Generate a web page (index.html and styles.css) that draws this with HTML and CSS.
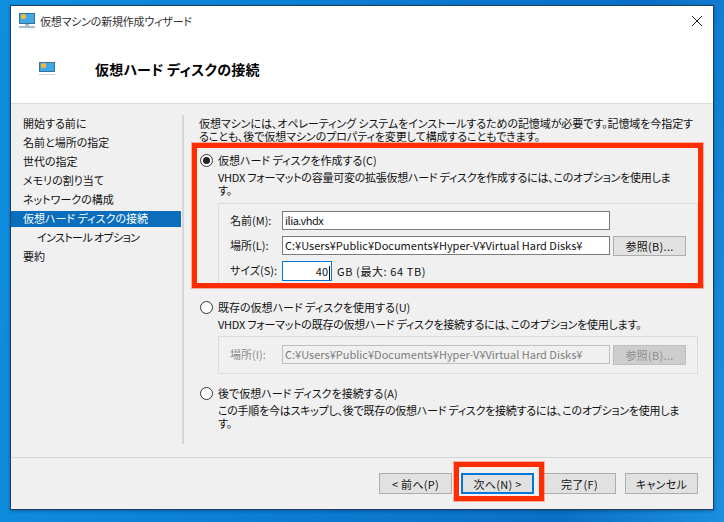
FILE: index.html
```html
<!DOCTYPE html>
<html lang="ja">
<head>
<meta charset="utf-8">
<title>仮想マシンの新規作成ウィザード</title>
<link rel="stylesheet" href="styles.css">
</head>
<body>
<div class="window">
  <div class="titlebar">
    <svg class="title-icon" width="16" height="16" viewBox="0 0 16 16"><rect x="0.5" y="0.5" width="15" height="10" fill="#3fa9e8" stroke="#3a6f96"/><circle cx="4.5" cy="3.5" r="2.6" fill="#f5b93a"/><rect x="6" y="11" width="4" height="2" fill="#a9bccb"/><rect x="0" y="13" width="16" height="2" fill="#a9bccb"/></svg>
    <span class="title-text">仮想マシンの新規作成ウィザード</span>
    <svg class="close" width="10" height="10" viewBox="0 0 10 10"><path d="M0 0L10 10M10 0L0 10" stroke="#222" fill="none"/></svg>
  </div>
  <div class="header">
    <svg class="head-icon" width="16" height="14" viewBox="0 0 16 14"><rect x="0.5" y="0.5" width="15" height="9" fill="#3fa9e8" stroke="#3a6f96"/><circle cx="4.5" cy="3.5" r="2.6" fill="#f5b93a"/><rect x="0" y="12" width="16" height="1" fill="#c5d2da"/></svg>
    <h1 class="head-title">仮想ハード ディスクの接続</h1>
  </div>
  <div class="body">
    <nav class="nav">
      <div class="nav-item">開始する前に</div>
      <div class="nav-item">名前と場所の指定</div>
      <div class="nav-item">世代の指定</div>
      <div class="nav-item">メモリの割り当て</div>
      <div class="nav-item">ネットワークの構成</div>
      <div class="nav-item nav-active">仮想ハード ディスクの接続</div>
      <div class="nav-item nav-sub">インストール オプション</div>
      <div class="nav-item">要約</div>
    </nav>
    <main class="content">
      <p class="intro">仮想マシンには、オペレーティング システムをインストールするための記憶域が必要です。記憶域を今指定す<br>ることも、後で仮想マシンのプロパティを変更して構成することもできます。</p>

      <div class="option opt-create">
        <div class="radio-row"><span class="radio radio-on"></span><span>仮想ハード ディスクを作成する(C)</span></div>
        <p class="desc">VHDX フォーマットの容量可変の拡張仮想ハード ディスクを作成するには、このオプションを使用しま<br>す。</p>
        <div class="group group-create">
          <div class="field"><span class="label">名前(M):</span><span class="input input-name">ilia.vhdx</span></div>
          <div class="field"><span class="label">場所(L):</span><span class="input">C:¥Users¥Public¥Documents¥Hyper-V¥Virtual Hard Disks¥</span><span class="btn btn-browse">参照(B)...</span></div>
          <div class="field"><span class="label">サイズ(S):</span><span class="input input-size">40</span><span class="unit">GB (最大: 64 TB)</span></div>
        </div>
      </div>

      <div class="option opt-existing">
        <div class="radio-row"><span class="radio"></span><span>既存の仮想ハード ディスクを使用する(U)</span></div>
        <p class="desc">VHDX フォーマットの既存の仮想ハード ディスクを接続するには、このオプションを使用します。</p>
        <div class="group group-existing">
          <div class="field field-disabled"><span class="label">場所(I):</span><span class="input input-disabled">C:¥Users¥Public¥Documents¥Hyper-V¥Virtual Hard Disks¥</span><span class="btn btn-browse btn-disabled">参照(B)...</span></div>
        </div>
      </div>

      <div class="option opt-later">
        <div class="radio-row"><span class="radio"></span><span>後で仮想ハード ディスクを接続する(A)</span></div>
        <p class="desc">この手順を今はスキップし、後で既存の仮想ハード ディスクを接続するには、このオプションを使用しま<br>す。</p>
      </div>
    </main>
  </div>
  <div class="footer">
    <span class="btn btn-foot">&lt; 前へ(P)</span>
    <span class="btn btn-foot btn-default">次へ(N) &gt;</span>
    <span class="btn btn-foot">完了(F)</span>
    <span class="btn btn-foot">キャンセル</span>
  </div>
  <div class="mark mark-form"></div>
  <div class="mark mark-next"></div>
</div>
</body>
</html>
```
FILE: styles.css
```css
* { box-sizing: border-box; }
html, body { margin: 0; height: 100%; }
body {
  width: 724px;
  height: 522px;
  overflow: hidden;
  padding: 5px 10px 0 10px;
  background: linear-gradient(100deg, #0f8fe0 0%, #0b7ad0 50%, #0a6fc6 80%, #1b8fe0 100%);
  font-family: "Noto Sans CJK JP", "Liberation Sans", sans-serif;
  font-size: 11px;
  font-feature-settings: "palt";
  color: #111;
}
.window {
  position: relative;
  width: 704px;
  height: 505px;
  background: #f0f0f0;
  border: 1px solid #1c3f63;
  display: flex;
  flex-direction: column;
  box-shadow: 0 1px 3px rgba(0, 0, 0, .3);
}
.titlebar {
  height: 29px;
  background: #fff;
  display: flex;
  align-items: center;
  padding: 0 11px 0 8px;
  flex: none;
}
.title-icon { flex: none; }
.title-text { margin-left: 5px; color: #333; line-height: 16px; letter-spacing: -.2px; }
.close { margin-left: auto; }
.header {
  height: 69px;
  background: #fff;
  border-bottom: 1px solid #dcdcdc;
  display: flex;
  align-items: center;
  padding: 0 0 1px 28px;
  flex: none;
}
.head-title {
  margin: 0 0 0 40px;
  font-size: 14px;
  font-weight: 700;
  color: #000;
  line-height: 18px;
  letter-spacing: .25px;
}
.body { display: flex; flex: none; height: 353px; }
.nav {
  width: 173px;
  flex: none;
  margin-top: 11px;
  height: 329px;
  border-right: 2px solid #d6d6d6;
  padding-top: 1px;
}
.nav-item {
  height: 19px;
  line-height: 15px;
  padding-left: 12px;
  white-space: nowrap;
}
.nav-active {
  background: #0a6ebd;
  color: #fff;
  margin-right: 1px;
  height: 16px;
  margin-bottom: 3px;
}
.nav-sub { padding-left: 26px; letter-spacing: -.6px; }
.content { flex: 1; padding-left: 15px; position: relative; min-width: 0; }
.intro {
  margin: 13px 0 0;
  line-height: 13px;
  white-space: nowrap;
  letter-spacing: -.08px;
}
.option { display: block; }
.opt-create { margin-top: 9px; }
.opt-existing { margin-top: 12px; }
.opt-later { margin-top: 11px; }
.radio-row {
  display: flex;
  align-items: center;
  height: 16px;
  line-height: 16px;
  padding-left: 1px;
  white-space: nowrap;
}
.radio {
  width: 13px;
  height: 13px;
  border-radius: 50%;
  border: 1px solid #333;
  background: #fff;
  margin-right: 5px;
  flex: none;
  position: relative;
}
.radio-on { display: flex; align-items: center; justify-content: center; }
.radio-on::after {
  content: "";
  width: 7px;
  height: 7px;
  border-radius: 50%;
  background: #222;
}
.desc {
  margin: 3px 0 0 19px;
  line-height: 13px;
  white-space: nowrap;
  letter-spacing: -.25px;
}
.group {
  margin: 5px 0 0 19px;
  width: 480px;
  border: 1px solid #dcdcdc;
  padding: 7px 10px 0 11px;
}
.group-create { height: 84px; margin-top: 6px; }
.group-existing { height: 38px; padding-top: 8px; }
.field { display: flex; align-items: flex-start; height: 25px; }
.label { width: 52px; flex: none; line-height: 19px; white-space: nowrap; }
.input {
  width: 328px;
  height: 19px;
  line-height: 17px;
  border: 1px solid #7a7a7a;
  background: #fff;
  padding-left: 2px;
  white-space: nowrap;
  overflow: hidden;
  flex: none;
}
.input-name { letter-spacing: -.5px; }
.input-size {
  width: 50px;
  height: 20px;
  line-height: 18px;
  border-color: #0078d7;
  text-align: right;
  padding-right: 1px;
}
.input-size::after {
  content: "";
  display: inline-block;
  width: 1px;
  height: 14px;
  margin-left: 1px;
  background: #111;
  vertical-align: middle;
}
.unit { margin-left: 5px; line-height: 20px; letter-spacing: .6px; }
.btn {
  display: flex;
  align-items: center;
  justify-content: center;
  background: #e1e1e1;
  border: 1px solid #adadad;
  color: #111;
  white-space: nowrap;
  flex: none;
  letter-spacing: .3px;
}
.btn-browse { width: 73px; height: 20px; margin-left: 3px; }
.field-disabled .label { color: #8a8a8a; }
.input-disabled { background: #f0f0f0; border-color: #bfbfbf; color: #7d7d7d; }
.btn-disabled { background: #cdcdcd; border-color: #bfbfbf; color: #8f8f8f; }
.footer {
  flex: none;
  height: 52px;
  border-top: 1px solid #d6d6d6;
  display: flex;
  justify-content: flex-end;
  gap: 9px;
  padding: 15px 15px 0 0;
}
.btn-foot { width: 73px; height: 21px; }
.btn-default { border: 2px solid #0078d7; }
.mark {
  position: absolute;
  border: 5px solid #ff2d00;
  box-shadow: 0 0 0 1px rgba(255, 90, 60, .45);
  pointer-events: none;
}
.mark-form { left: 181px; top: 137px; width: 511px; height: 145px; }
.mark-next { left: 443px; top: 456px; width: 90px; height: 39px; }
```
